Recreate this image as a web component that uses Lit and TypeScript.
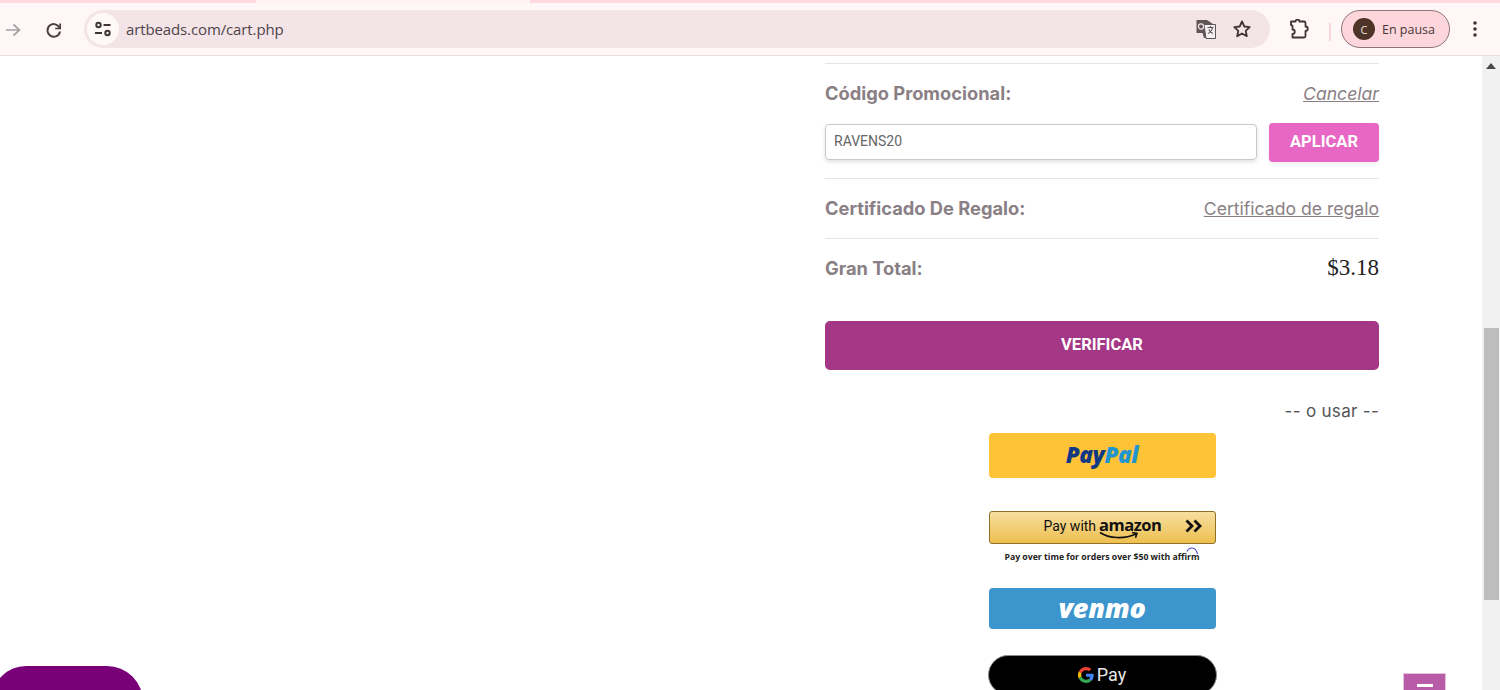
import { LitElement, html, css } from "lit";
import { customElement } from "lit/decorators.js";

@customElement("app-root")
export class AppRoot extends LitElement {
  static styles = css`
    :host { display: block; position: relative; width: 1500px; height: 690px; overflow: hidden; background: #fff; font-family: Roboto, "Liberation Sans", sans-serif; }
    * { box-sizing: border-box; }
    .shell { display: flex; flex-direction: column; height: 690px; }
    .tabstrip { display: flex; height: 3px; flex: none; background: #ffd9df; }
    .tabstrip .gap { width: 274px; margin-left: 256px; background: #fff3f5; }
    .toolbar { flex: none; height: 53px; background: #fff6f7; border-bottom: 1px solid #e9dfe1; display: flex; align-items: flex-start; padding-top: 7px; color: #3f3335; }
    .tb-icon { display: flex; flex: none; }
    .back { margin: 11px 0 0 4px; }
    .reload { margin: 10px 0 0 22px; }
    .omni { flex: none; width: 1186px; height: 38px; margin-left: 20px; border-radius: 19px; background: #f3e4e8; display: flex; align-items: center; padding: 0 18px 0 3px; }
    .site { width: 32px; height: 32px; border-radius: 50%; background: #fff8f9; display: flex; align-items: center; justify-content: center; flex: none; }
    .url { margin-left: 7px; font: 400 15px "Open Sans", sans-serif; letter-spacing: -0.12px; color: #4f4548; flex: 1; }
    .translate { margin-right: 16px; }
    .puzzle { margin: 9px 0 0 19px; }
    .sep { flex: none; width: 2px; height: 18px; margin: 13px 0 0 20px; background: #f6d8dc; }
    .profile { flex: none; width: 109px; height: 38px; margin-left: 10px; border-radius: 19px; border: 1px solid #8d7376; background: #fdd6db; display: flex; align-items: center; padding-left: 11px; gap: 7px; font: 400 12.5px "Open Sans", sans-serif; color: #45383a; }
    .avatar { width: 22px; height: 22px; border-radius: 50%; background: #4e3329; color: #f0e4e0; font-size: 11px; display: flex; align-items: center; justify-content: center; }
    .dots { margin: 10px 0 0 23px; }
    .body { flex: 1; display: flex; min-height: 0; }
    .page { flex: 1; min-width: 0; overflow: hidden; padding: 7px 0 0 825px; }
    .col { width: 554px; }
    .scrollbar { flex: none; width: 18px; background: #f1f1f1; display: flex; flex-direction: column; align-items: center; }
    .up { margin-top: 7px; width: 0; height: 0; border-left: 5px solid transparent; border-right: 5px solid transparent; border-bottom: 6px solid #4a4a4a; }
    .thumb { margin-top: 259px; width: 15px; height: 272px; background: #bdbdbd; }
    .rule { border-top: 1px solid #e6e4e5; }
    .row { display: flex; justify-content: space-between; align-items: center; }
    .label { font: 700 18.3px Inter, Roboto, sans-serif; color: #8a7f85; padding-bottom: 2px; }
    .promo { height: 59px; }
    .link { font: 400 17.6px Inter, Roboto, sans-serif; color: #8a7f85; text-decoration: underline; }
    .link.it { font-style: italic; }
    .apply { display: flex; justify-content: space-between; height: 55px; }
    .input { width: 432px; height: 36px; margin-top: 1px; border: 1px solid #c9c9c9; border-radius: 4px; box-shadow: 0 2px 4px rgba(0,0,0,.12); padding: 0 0 3px 8px; display: flex; align-items: center; font-size: 14px; color: #666; }
    .btn-apply { width: 110px; height: 39px; background: #e867c4; border-radius: 4px; color: #fff; font-weight: 700; font-size: 16.5px; padding-bottom: 2px; display: flex; align-items: center; justify-content: center; box-shadow: 0 2px 4px rgba(0,0,0,.08); }
    .gift { height: 59px; }
    .total { height: 59px; }
    .price { font: 400 23px "Liberation Serif", serif; color: #222; padding-bottom: 2px; }
    .verify { margin-top: 23px; height: 49px; border-radius: 5px; background: #a43786; color: #fff; font-weight: 700; font-size: 16.5px; padding-bottom: 2px; display: flex; align-items: center; justify-content: center; }
    .or { margin-top: 29px; text-align: right; font: 400 17px/24px Inter, Roboto, sans-serif; color: #555; letter-spacing: .3px; }
    .pay { width: 227px; margin: 10px auto 0; display: flex; flex-direction: column; }
    .paypal { height: 45px; border-radius: 4px; background: #ffc337; display: flex; align-items: center; justify-content: center; font: italic 800 22.5px "Open Sans", sans-serif; letter-spacing: -.4px; padding-bottom: 3px; }
    .pp1 { color: #123a84; }
    .pp2 { color: #1f95cf; }
    .amazon { position: relative; margin-top: 33px; height: 33px; border-radius: 3px; border: 1px solid #8f7026; background: linear-gradient(#f6df9f, #eebf4f); display: flex; align-items: center; padding: 0 13px 3px 54px; color: #111; font-size: 14px; }
    .amz { position: relative; margin-left: 3px; font: 700 16.5px "Open Sans", sans-serif; letter-spacing: -.5px; line-height: 20px; top: -1px; }
    .smile { position: absolute; left: 109px; top: 19px; }
    .chev { margin-left: auto; display: flex; }
    .affirm { margin-top: 7px; height: 12px; text-align: center; white-space: nowrap; font: 700 8.7px/12px "Open Sans", sans-serif; color: #222; position: relative; }
    .arc { position: absolute; left: 197px; top: -5px; }
    .venmo { margin-top: 25px; height: 41px; border-radius: 4px; background: #3d95ce; color: #fff; display: flex; align-items: center; justify-content: center; font: italic 800 27px "Open Sans", sans-serif; letter-spacing: -.3px; padding-bottom: 3px; }
    .gpay { margin: 26px -1px 0; height: 40px; border-radius: 20px; border: 1px solid #8a8a8a; background: #000; color: #e8e8e8; display: flex; align-items: flex-start; justify-content: center; gap: 3px; padding-top: 9px; font-size: 18px; line-height: 20px; }
    .gpay svg { margin-top: 2px; }
    .chat { position: absolute; left: -8px; top: 666px; width: 151px; height: 70px; border-radius: 34px 36px 0 0; background: #7a0078; }
    .minus { position: absolute; left: 1403px; top: 673px; width: 43px; height: 30px; background: #b85ca8; border: 1px solid #e6c3df; display: flex; justify-content: center; padding-top: 10px; }
    .minus span { width: 16px; height: 3px; background: #fff; }
  `;

  render() {
    return html`
      <div class="shell">
        <div class="tabstrip"><div class="gap"></div></div>
        <div class="toolbar">
          <span class="tb-icon back"><svg width="18" height="18" viewBox="0 0 18 18" fill="none" stroke="#a8a0a2" stroke-width="1.7"><path d="M2 9h13.500M9.500 3.500 15.500 9l-6 5.500"/></svg></span>
          <span class="tb-icon reload"><svg width="20" height="20" viewBox="0 0 20 20" fill="none" stroke="#4a3d3f" stroke-width="1.9"><path d="M15.700 8.200A6.300 6.300 0 1 0 16 11.500"/><path d="M16.200 3.500v5h-5" stroke-width="1.700"/></svg></span>
          <div class="omni">
            <span class="site"><svg width="18" height="16" viewBox="0 0 18 16" fill="none" stroke="#3f3335" stroke-width="2"><circle cx="4.500" cy="4" r="2.200"/><path d="M9.500 4h7M1 12h7"/><circle cx="13.500" cy="12" r="2.200"/></svg></span>
            <span class="url">artbeads.com/cart.php</span>
            <span class="tb-icon translate"><svg width="20" height="20" viewBox="0 0 20 20"><path d="M0.500 1h10.500l6 4v14H8L6.500 14H.5z" fill="#5f5557"/><path d="M8 5.500h11.500V19.500H10z" fill="#f4eef0" stroke="#5f5557"/><circle cx="5" cy="7.500" r="2.600" fill="none" stroke="#f3e4e8" stroke-width="1.200"/><path d="M11.500 8.500h6M14.500 7v1.500M16.500 8.500c-.6 3-2.400 5-4.500 6M12.800 10.500c.8 2 2.300 3.300 4 4" fill="none" stroke="#5f5557" stroke-width="1.100"/></svg></span>
            <span class="tb-icon"><svg width="20" height="20" viewBox="0 0 20 20" fill="none" stroke="#3f3335" stroke-width="1.800" stroke-linejoin="round"><path d="m10 2.500 2.300 5 5.400.6-4 3.700 1.100 5.400L10 14.500l-4.800 2.700 1.100-5.400-4-3.700 5.400-.6z"/></svg></span>
          </div>
          <span class="tb-icon puzzle"><svg width="20" height="20" viewBox="0 0 20 20" fill="none" stroke="#3f3335" stroke-width="1.800" stroke-linejoin="round"><path d="M2 2.500h4.500a2 2 0 0 1 4 0H15a1.500 1.500 0 0 1 1.500 1.500v3.500a2 2 0 0 1 0 4.500V17a1.500 1.500 0 0 1-1.500 1.500H3.500V15a2.200 2.200 0 0 0 0-4.500V7A1.500 1.500 0 0 0 2 6z"/></svg></span>
          <span class="sep"></span>
          <div class="profile"><span class="avatar">C</span><span>En pausa</span></div>
          <span class="tb-icon dots"><svg width="4" height="18" viewBox="0 0 4 18" fill="#3f3335"><circle cx="2" cy="3" r="1.800"/><circle cx="2" cy="9" r="1.800"/><circle cx="2" cy="15" r="1.800"/></svg></span>
        </div>
        <div class="body">
          <div class="page">
            <div class="col">
              <div class="rule"></div>
              <div class="row promo"><span class="label">Código Promocional:</span><span class="link it">Cancelar</span></div>
              <div class="apply"><div class="input">RAVENS20</div><div class="btn-apply">APLICAR</div></div>
              <div class="rule"></div>
              <div class="row gift"><span class="label">Certificado De Regalo:</span><span class="link">Certificado de regalo</span></div>
              <div class="rule"></div>
              <div class="row total"><span class="label">Gran Total:</span><span class="price">$3.18</span></div>
              <div class="verify">VERIFICAR</div>
              <div class="or">-- o usar --</div>
              <div class="pay">
                <div class="paypal"><span class="pp1">Pay</span><span class="pp2">Pal</span></div>
                <div class="amazon">
                  <span>Pay with</span><span class="amz">amazon</span>
                  <svg class="smile" width="42" height="9" viewBox="0 0 42 9" fill="none" stroke="#111" stroke-width="1.600"><path d="M1 1.500c9 6 24 7 36 1.500M33 1.500l5 .8-1.500 4.500"/></svg>
                  <span class="chev"><svg width="17" height="14" viewBox="0 0 17 14" fill="none" stroke="#111" stroke-width="2.800"><path d="m1.500 1.500 5.500 5.500-5.500 5.500M9.500 1.500 15 7l-5.500 5.500"/></svg></span>
                </div>
                <div class="affirm">Pay over time for orders over $50 with affirm
                  <svg class="arc" width="13" height="9" viewBox="0 0 13 9" fill="none" stroke="#4a4ac8" stroke-width="1.100"><path d="M1 5.500C3 1 9.500 0 11.500 8"/></svg>
                </div>
                <div class="venmo">venmo</div>
                <div class="gpay">
                  <svg width="16" height="16" viewBox="0 0 48 48"><path fill="#EA4335" d="M24 9.500c3.500 0 6.700 1.200 9.200 3.600l6.900-6.900C35.900 2.400 30.500 0 24 0 14.600 0 6.500 5.400 2.600 13.200l8 6.200C12.500 13.700 17.800 9.500 24 9.500z"/><path fill="#4285F4" d="M47 24.500c0-1.600-.1-3.100-.4-4.500H24v9h12.900c-.6 3-2.200 5.500-4.700 7.200l7.700 6C44.400 38 47 31.800 47 24.500z"/><path fill="#FBBC05" d="M10.500 28.600a14.500 14.500 0 0 1 0-9.200l-8-6.200a24 24 0 0 0 0 21.600z"/><path fill="#34A853" d="M24 48c6.500 0 11.900-2.100 15.900-5.800l-7.700-6c-2.200 1.500-5 2.300-8.200 2.300-6.200 0-11.500-4.200-13.400-9.900l-8 6.200C6.500 42.600 14.600 48 24 48z"/></svg>
                  <span>Pay</span>
                </div>
              </div>
            </div>
          </div>
          <div class="scrollbar"><div class="up"></div><div class="thumb"></div></div>
        </div>
      </div>
      <div class="chat"></div>
      <div class="minus"><span></span></div>
    `;
  }
}
